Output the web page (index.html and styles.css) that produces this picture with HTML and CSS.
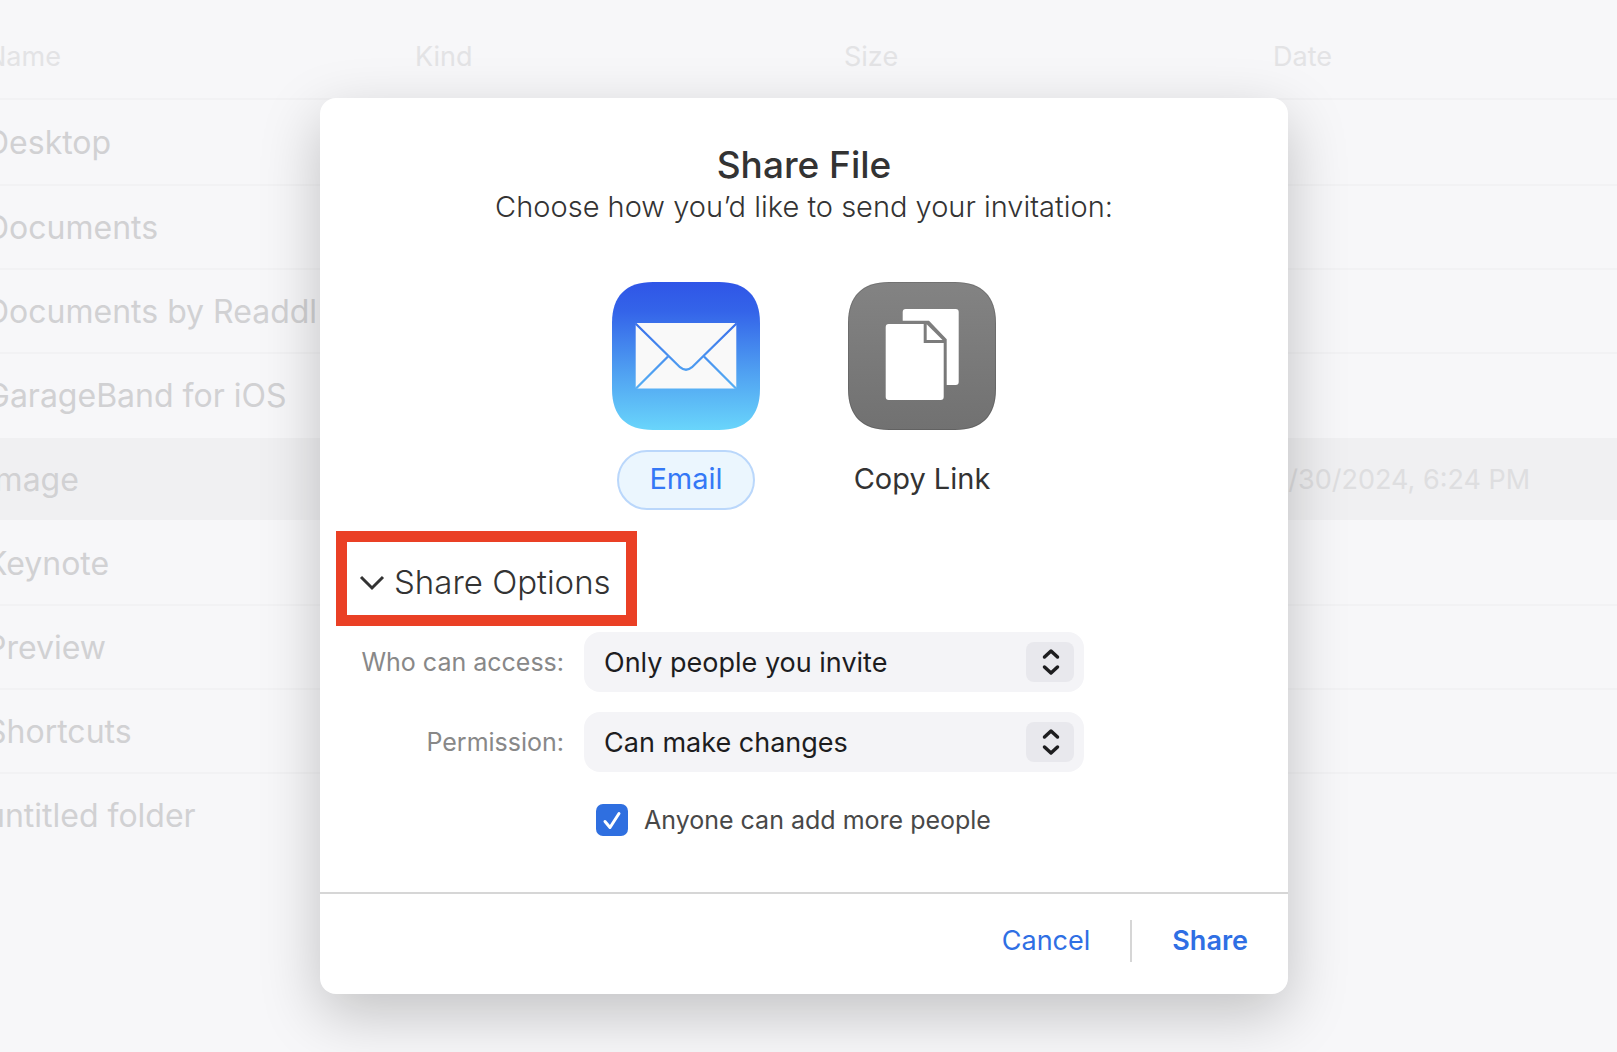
FILE: index.html
```html
<!DOCTYPE html>
<html lang="en">
<head>
<meta charset="utf-8">
<meta name="viewport" content="width=device-width, initial-scale=1">
<title>Share File</title>
<link rel="stylesheet" href="styles.css">
</head>
<body>
<main class="browser">
  <table class="files">
    <thead>
      <tr><th scope="col">Name</th><th scope="col">Kind</th><th scope="col">Size</th><th scope="col">Date</th></tr>
    </thead>
    <tbody>
      <tr><td class="name">Desktop</td><td></td><td></td><td></td></tr>
      <tr><td class="name">Documents</td><td></td><td></td><td></td></tr>
      <tr><td class="name">Documents by Readdl</td><td></td><td></td><td></td></tr>
      <tr class="before-selected"><td class="name">GarageBand for iOS</td><td></td><td></td><td></td></tr>
      <tr class="selected"><td class="name">Image</td><td></td><td></td><td class="date">7/30/2024, 6:24 PM</td></tr>
      <tr><td class="name">Keynote</td><td></td><td></td><td></td></tr>
      <tr><td class="name">Preview</td><td></td><td></td><td></td></tr>
      <tr><td class="name">Shortcuts</td><td></td><td></td><td></td></tr>
      <tr><td class="name">untitled folder</td><td></td><td></td><td></td></tr>
    </tbody>
  </table>
</main>

<div class="overlay">
  <form class="dialog" role="dialog" aria-labelledby="dialog-title">
    <header class="heading">
      <h1 class="title" id="dialog-title">Share File</h1>
      <p class="subtitle">Choose how you’d like to send your invitation:</p>
    </header>

    <div class="methods">
      <button type="button" class="method active" aria-pressed="true">
        <svg class="tile" viewBox="0 0 148 148" aria-hidden="true">
          <defs>
            <linearGradient id="sky" gradientUnits="userSpaceOnUse" x1="0" y1="0" x2="0" y2="148">
              <stop offset="0" stop-color="#2f55e7"/>
              <stop offset=".2" stop-color="#3464e9"/>
              <stop offset=".6" stop-color="#4f9ff1"/>
              <stop offset="1" stop-color="#69d5fb"/>
            </linearGradient>
          </defs>
          <path fill="url(#sky)" d="M0 41C0 14 14 0 41 0H107C134 0 148 14 148 41V107C148 134 134 148 107 148H41C14 148 0 134 0 107Z"/>
          <rect x="23.7" y="41" width="100.6" height="65.6" rx="1" fill="#f9f9f9"/>
          <g fill="none" stroke="url(#sky)" stroke-width="2.3">
            <path d="M23.5 41.5L68 85.2Q74 90.2 80 85.2L124.500 41.5"/>
            <path d="M24 106.500L56 74.500M124 106.500L92 74.500"/>
          </g>
        </svg>
        <span class="method-label">Email</span>
      </button>
      <button type="button" class="method" aria-pressed="false">
        <svg class="tile" viewBox="0 0 148 148" aria-hidden="true">
          <defs>
            <linearGradient id="slate" x1="0" y1="0" x2="0" y2="1">
              <stop offset="0" stop-color="#838383"/>
              <stop offset="1" stop-color="#717171"/>
            </linearGradient>
          </defs>
          <path fill="url(#slate)" d="M0 41C0 14 14 0 41 0H107C134 0 148 14 148 41V107C148 134 134 148 107 148H41C14 148 0 134 0 107Z"/>
          <path fill="none" stroke="#000" stroke-opacity=".13" d="M.5 41C.5 14.500 14.500 .5 41 .5H107C133.500 .5 147.500 14.500 147.500 41V107C147.500 133.500 133.500 147.500 107 147.500H41C14.500 147.500 .5 133.500 .5 107Z"/>
          <g fill="#fff">
            <path d="M54.700 38.700V30Q54.700 27 57.700 27H107.700Q110.700 27 110.700 30V100Q110.700 103 107.700 103H98.700V57.300L81 38.700Z"/>
            <path d="M40.700 42H75.700V61H95.700V115Q95.700 118 92.700 118H40.700Q37.700 118 37.700 115V45Q37.700 42 40.700 42Z"/>
            <path d="M78.700 42.300L94.500 58H78.700Z"/>
          </g>
        </svg>
        <span class="method-label">Copy Link</span>
      </button>
    </div>

    <section class="options">
      <div class="highlight">
        <button type="button" class="disclosure" aria-expanded="true" aria-controls="share-options">
          <svg class="chevron" viewBox="0 0 28 20" aria-hidden="true"><path d="M3 5L14 16L25 5"/></svg>
          Share Options
        </button>
      </div>
      <div class="fields" id="share-options">
        <label class="field-label" for="access">Who can access:</label>
        <div class="picker">
          <select id="access"><option>Only people you invite</option><option>Anyone with the link</option></select>
          <svg class="stepper" viewBox="0 0 48 40" aria-hidden="true"><path d="M18.500 15L25 9L31.500 15M18.500 25L25 31L31.500 25"/></svg>
        </div>
        <label class="field-label" for="permission">Permission:</label>
        <div class="picker">
          <select id="permission"><option>Can make changes</option><option>View only</option></select>
          <svg class="stepper" viewBox="0 0 48 40" aria-hidden="true"><path d="M18.500 15L25 9L31.500 15M18.500 25L25 31L31.500 25"/></svg>
        </div>
        <label class="check">
          <span class="box">
            <input type="checkbox" checked>
            <svg class="tick" viewBox="0 0 32 32" aria-hidden="true"><path d="M9 17.500L14 23.500L23 9.500"/></svg>
          </span>
          Anyone can add more people
        </label>
      </div>
    </section>

    <footer class="actions">
      <button type="button" class="action">Cancel</button>
      <span class="divider"></span>
      <button type="submit" class="action primary">Share</button>
    </footer>
  </form>
</div>
</body>
</html>
```
FILE: styles.css
```css
* {
  box-sizing: border-box;
}

body {
  margin: 0;
  min-height: 100vh;
  overflow: hidden;
  background: #f7f7f9;
  color: #333;
  font-family: Inter, "Liberation Sans", sans-serif;
}

button {
  margin: 0;
  padding: 0;
  border: 0;
  background: none;
  color: inherit;
  font: inherit;
}

/* File list, scrolled slightly past its left edge */
.browser {
  overflow: hidden;
}

.files {
  width: calc(100% + 99px);
  margin-left: -14px;
  border-collapse: separate;
  border-spacing: 0;
  table-layout: fixed;
  line-height: 40px;
  white-space: nowrap;
}

.files th {
  height: 100px;
  padding: 16px 0 0;
  border-bottom: 2px solid #f2f2f4;
  color: #e3e3e5;
  font-size: 27px;
  font-weight: 400;
  text-align: left;
}

.files td {
  height: 84px;
  padding: 2px 0 0;
  border-bottom: 2px solid #f2f2f4;
}

.files tbody tr:first-child td {
  height: 86px;
}

.files .name {
  color: #d1d1d3;
  font-size: 32px;
}

.files .date {
  color: #dedee0;
  font-size: 27px;
}

.files .before-selected td,
.files tbody tr:last-child td {
  border-color: transparent;
}

.files .selected td {
  border-color: #f7f7f9;
  background: #f0f0f2;
}

/* Dialog */
.overlay {
  position: absolute;
  inset: 0;
  display: flex;
  justify-content: center;
  align-items: flex-start;
  padding: 98px 9px 58px 0;
}

.dialog {
  width: 968px;
  max-width: 100%;
  border-radius: 16px;
  background: #fff;
  box-shadow: 0 20px 60px rgba(0, 0, 0, .22);
}

.heading {
  padding-top: 44px;
  text-align: center;
}

.title {
  margin: 0;
  font-size: 37px;
  font-weight: 500;
  line-height: 46px;
}

.subtitle {
  margin: 0;
  font-size: 29px;
  font-weight: 300;
  line-height: 38px;
}

.methods {
  display: flex;
  justify-content: center;
  gap: 88px;
  margin-top: 56px;
}

.method {
  display: flex;
  flex-direction: column;
  align-items: center;
  gap: 20px;
  width: 148px;
}

.tile {
  width: 148px;
  height: 148px;
}

.method-label {
  padding: 0 30px 2px;
  border: 2px solid transparent;
  border-radius: 30px;
  font-size: 29px;
  line-height: 54px;
  white-space: nowrap;
}

.active .method-label {
  border-color: #bad7fb;
  background: #ebf6fe;
  color: #3478f6;
}

.options {
  padding: 21px 38px 56px 16px;
}

.highlight {
  width: fit-content;
  padding: 20px 15px 13px 11px;
  border: 11px solid #ea4025;
}

.disclosure {
  display: flex;
  align-items: center;
  gap: 8px;
  font-size: 33px;
  font-weight: 300;
  line-height: 40px;
}

.chevron {
  width: 28px;
  height: 20px;
  fill: none;
  stroke: #333;
  stroke-width: 3;
}

.fields {
  display: grid;
  grid-template-columns: 206px minmax(0, 500px);
  gap: 20px;
  margin-top: 6px;
  padding-left: 22px;
}

.field-label {
  color: #888;
  font-size: 25px;
  font-weight: 400;
  line-height: 60px;
  text-align: right;
  white-space: nowrap;
}

.picker {
  display: grid;
  align-items: center;
}

.picker select {
  grid-area: 1 / 1;
  width: 100%;
  height: 60px;
  padding: 2px 68px 0 20px;
  border: 0;
  border-radius: 16px;
  appearance: none;
  background: #f4f4f7;
  color: #1d1d1f;
  font: 400 27px/40px Inter, "Liberation Sans", sans-serif;
}

.stepper {
  grid-area: 1 / 1;
  justify-self: end;
  width: 48px;
  height: 40px;
  margin-right: 10px;
  border-radius: 8px;
  background: #e8e8ed;
  fill: none;
  stroke: #1d1d1f;
  stroke-linecap: round;
  stroke-linejoin: round;
  stroke-width: 3.5;
  pointer-events: none;
}

.check {
  display: flex;
  grid-column: 2;
  align-items: center;
  gap: 16px;
  margin-top: 12px;
  padding-left: 12px;
  color: #484848;
  font-size: 25px;
  font-weight: 400;
  line-height: 32px;
  white-space: nowrap;
}

.box {
  display: grid;
  width: 32px;
  height: 32px;
}

.box input {
  grid-area: 1 / 1;
  width: 32px;
  height: 32px;
  margin: 0;
  border-radius: 7px;
  appearance: none;
  background: #2f6fe0;
}

.tick {
  grid-area: 1 / 1;
  fill: none;
  stroke: #fff;
  stroke-linecap: round;
  stroke-linejoin: round;
  stroke-width: 3;
  pointer-events: none;
}

.actions {
  display: flex;
  justify-content: flex-end;
  gap: 40px;
  padding: 26px 40px 32px;
  border-top: 2px solid #d6d6d6;
}

.action {
  color: #2f6fe4;
  font-size: 27px;
  line-height: 42px;
}

.primary {
  font-weight: 600;
}

.divider {
  width: 2px;
  background: #d6d6d6;
}
```
